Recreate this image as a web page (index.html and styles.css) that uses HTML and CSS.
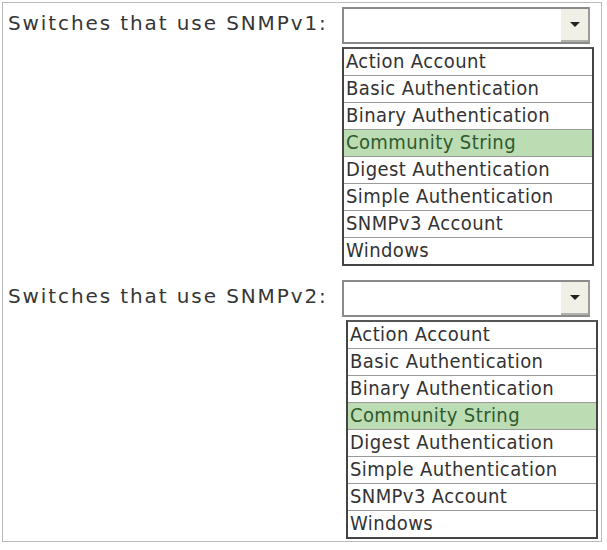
FILE: index.html
```html
<!DOCTYPE html>
<html lang="en">
<head>
    <meta charset="UTF-8">
    <title>SNMP Switches</title>
    <link rel="stylesheet" href="styles.css">
</head>
<body>
    <div class="frame">
        <div class="row">
            <span class="label">Switches that use SNMPv1:</span>
            <div class="control">
                <div class="select">
                    <span class="value"></span>
                    <span class="arrow"></span>
                </div>
                <ul class="listbox">
                    <li>Action Account</li>
                    <li>Basic Authentication</li>
                    <li>Binary Authentication</li>
                    <li class="chosen">Community String</li>
                    <li>Digest Authentication</li>
                    <li>Simple Authentication</li>
                    <li>SNMPv3 Account</li>
                    <li>Windows</li>
                </ul>
            </div>
        </div>
        <div class="row second">
            <span class="label">Switches that use SNMPv2:</span>
            <div class="control">
                <div class="select">
                    <span class="value"></span>
                    <span class="arrow"></span>
                </div>
                <ul class="listbox shifted">
                    <li>Action Account</li>
                    <li>Basic Authentication</li>
                    <li>Binary Authentication</li>
                    <li class="chosen">Community String</li>
                    <li>Digest Authentication</li>
                    <li>Simple Authentication</li>
                    <li>SNMPv3 Account</li>
                    <li>Windows</li>
                </ul>
            </div>
        </div>
    </div>
</body>
</html>
```

FILE: styles.css
```css
body {
    margin: 0;
    padding: 2px;
    background: #fff;
    font-family: "DejaVu Sans", Verdana, sans-serif;
    color: #333;
}
.frame {
    width: 600px;
    height: 540px;
    border: 1px solid #bbb;
    box-sizing: border-box;
    padding: 4px 0 0 5px;
}
.row {
    display: flex;
    align-items: flex-start;
}
.row.second {
    margin-top: 14px;
}
.label {
    width: 334px;
    font-size: 20px;
    letter-spacing: 1.9px;
    padding-top: 4px;
    color: #363636;
    white-space: nowrap;
}
.select {
    width: 248px;
    height: 37px;
    box-sizing: border-box;
    border: 2px solid #8a8a8a;
    border-right-color: #9a9a9a;
    background: #fff;
    display: flex;
    justify-content: flex-end;
}
.value {
    flex: 1;
}
.arrow {
    width: 27px;
    background: #f0f0e6;
    border-bottom: 2px solid #b0b0a8;
    display: flex;
    align-items: center;
    justify-content: center;
}
.arrow::after {
    content: "";
    border-left: 5px solid transparent;
    border-right: 5px solid transparent;
    border-top: 5px solid #222;
}
.listbox {
    list-style: none;
    margin: 3px 0 0 0;
    padding: 0;
    width: 252px;
    box-sizing: border-box;
    border: 2px solid #444;
    border-top-color: #555;
    background: #fff;
}
.listbox.shifted {
    margin-left: 4px;
}
.listbox li {
    height: 26px;
    border-bottom: 1px solid #999;
    padding-left: 2px;
    font-family: "DejaVu Sans Condensed", "DejaVu Sans", sans-serif;
    font-size: 20px;
    letter-spacing: 0.4px;
    line-height: 25px;
    color: #333;
    white-space: nowrap;
}
.listbox li:last-child {
    border-bottom: none;
}
.listbox li.chosen {
    background: #bcdcb4;
    color: #2e5a2e;
}
```
